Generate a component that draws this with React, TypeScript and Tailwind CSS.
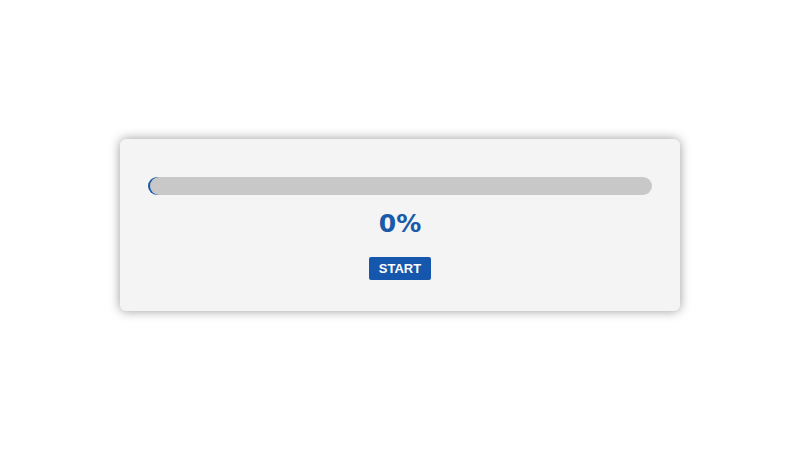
export default function App() {
  const progress = 0;

  return (
    <div className="min-h-screen w-full bg-white flex items-center justify-center font-['Liberation_Sans',Arial,sans-serif]">
      <div className="w-[560px] h-[172px] bg-[#f4f4f4] rounded-[6px] shadow-[0_0_11px_rgba(0,0,0,0.4)] px-[28px] pt-[38px] flex flex-col items-center">
        {/* progress track */}
        <div className="w-full h-[18px] flex">
          <div className="w-[18px] h-[18px] shrink-0 rounded-full bg-[#1a5aa8]" />
          <div className="flex-1 h-[18px] -ml-[16px] rounded-full bg-[#c8c8c8]" />
        </div>

        <div className="mt-[15px] text-[25px] leading-[28px] font-bold text-[#1a5aa8] font-['DejaVu_Sans',Verdana,sans-serif]">
          {progress}%
        </div>

        <button className="mt-[19px] h-[23px] px-[10px] rounded-[2px] bg-[#1557ad] text-white text-[13px] font-bold leading-none">
          START
        </button>
      </div>
    </div>
  );
}
